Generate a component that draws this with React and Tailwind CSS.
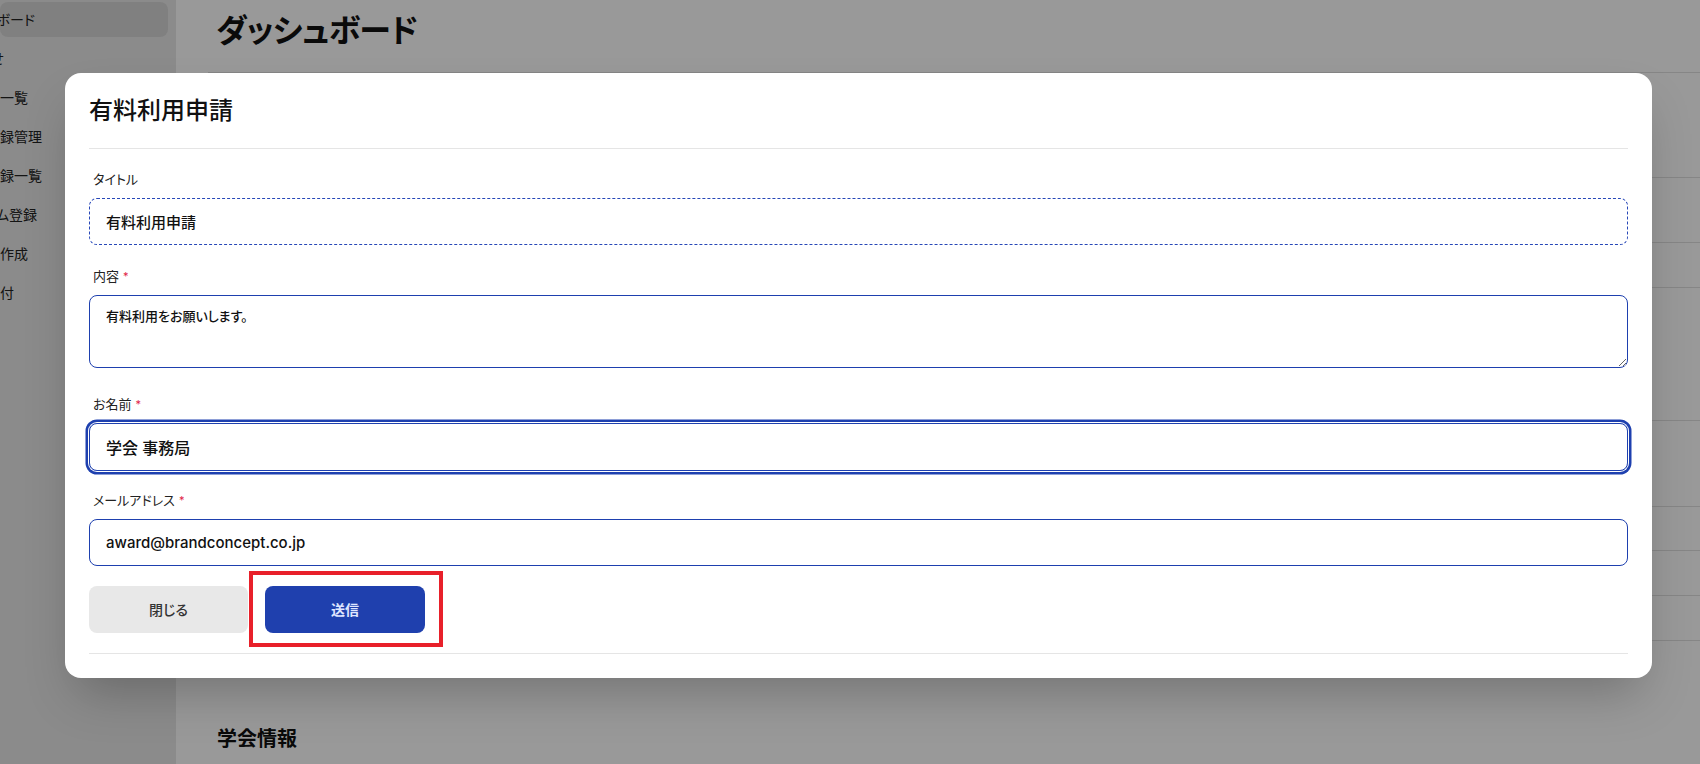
import { useState } from "react";

const menu = [
  { label: "ダッシュボード", shift: "-ml-[52px]", active: true },
  { label: "お知らせ", shift: "-ml-[49px]" },
  { label: "会員一覧", shift: "-ml-[28px]" },
  { label: "登録管理", shift: "-ml-[14px]" },
  { label: "登録一覧", shift: "-ml-[14px]" },
  { label: "プログラム登録", shift: "-ml-[55px]" },
  { label: "請求書作成", shift: "-ml-[42px]" },
  { label: "申請受付", shift: "-ml-[42px]" },
];

const rows = ["h-[105px]", "h-[65px]", "h-[45px]", "h-[133px]", "h-[86px]", "h-[44px]", "h-[45px]", "h-[45px]"];

function Label({ children, required }) {
  return (
    <label className="mb-[9px] flex h-5 items-center gap-1 text-[13px] leading-5 text-[#222]">
      {children}
      {required && <span className="text-[11px] text-[#e11d48]">*</span>}
    </label>
  );
}

function App() {
  const [title, setTitle] = useState("有料利用申請");
  const [body, setBody] = useState("有料利用をお願いします。");
  const [name, setName] = useState("学会 事務局");
  const [email, setEmail] = useState("award@brandconcept.co.jp");

  return (
    <div className="relative flex h-[764px] w-[1700px] overflow-hidden bg-white font-['Inter','Noto_Sans_CJK_JP',sans-serif] [font-feature-settings:'palt'] text-[#111]">
      {/* サイドバー */}
      <aside className="flex w-[176px] shrink-0 flex-col gap-[4px] bg-[#e8e8e8] pr-2 pt-[2px]">
        {menu.map((item) => (
          <div
            key={item.label}
            className={
              item.active
                ? "flex h-[35px] items-center overflow-hidden rounded-lg bg-[#d5d5d5] text-[14px] text-[#222]"
                : "flex h-[35px] items-center overflow-hidden text-[14px] text-[#222]"
            }
          >
            <span className={"whitespace-nowrap " + item.shift}>{item.label}</span>
          </div>
        ))}
      </aside>

      {/* メイン */}
      <main className="flex-1 pl-8 pt-[4px]">
        <h1 className="h-[68px] pl-[8px] pt-[5px] text-[32px] font-bold leading-[44px] tracking-[-0.02em]">ダッシュボード</h1>
        {rows.map((h, i) => (
          <div key={i} className={"border-t border-[#e0e0e0] " + h} />
        ))}
        <div className="border-t border-[#e0e0e0] pt-[84px] pl-[9px] text-[20px] font-bold leading-7">学会情報</div>
      </main>

      {/* モーダル */}
      <div className="absolute inset-0 bg-black/40 pl-[65px] pt-[73px]">
        <div className="w-[1587px] rounded-2xl bg-white px-6 pb-6 shadow-2xl">
          <div className="border-b border-[#e5e5e5] pb-[21px] pt-[22px]">
            <h2 className="text-[24px] font-medium leading-8 text-[#111]">有料利用申請</h2>
          </div>

          <form className="border-b border-[#e5e5e5] pb-5 pt-5" onSubmit={(e) => e.preventDefault()}>
            <div className="pl-[4px]">
              <Label>タイトル</Label>
            </div>
            <input
              value={title}
              onChange={(e) => setTitle(e.target.value)}
              className="block h-[47px] w-full rounded-lg border border-dashed border-[#2747b8] px-4 text-[15px] font-medium text-[#111] outline-none"
            />

            <div className="mt-[21px] pl-[4px]">
              <Label required>内容</Label>
            </div>
            <textarea
              value={body}
              onChange={(e) => setBody(e.target.value)}
              className="block h-[73px] w-full rounded-lg border border-[#1e40af] px-4 pt-[10px] text-[13px] font-medium leading-5 text-[#111] outline-none"
            />

            <div className="mt-[26px] pl-[4px]">
              <Label required>お名前</Label>
            </div>
            <input
              value={name}
              onChange={(e) => setName(e.target.value)}
              className="block h-[48px] w-full rounded-lg border border-[#1e40af] px-4 text-[16px] font-medium text-[#111] outline-none ring-[2.5px] ring-[#1e40af] ring-offset-[1px]"
            />

            <div className="mt-[19px] pl-[4px]">
              <Label required>メールアドレス</Label>
            </div>
            <input
              value={email}
              onChange={(e) => setEmail(e.target.value)}
              className="block h-[47px] w-full rounded-lg border border-[#1e40af] px-4 text-[15px] font-medium text-[#111] outline-none"
            />

            <div className="mt-5 flex gap-[17px]">
              <button type="button" className="h-[47px] w-[159px] rounded-lg bg-[#e8e8e8] text-[14px] font-medium text-[#333]">
                閉じる
              </button>
              <div className="relative">
                <button type="submit" className="h-[47px] w-[160px] rounded-lg bg-[#1f40ae] text-[14px] font-semibold text-[#dfe6ff]">
                  送信
                </button>
                <span className="pointer-events-none absolute -bottom-[14px] -left-[16px] -right-[18px] -top-[15px] border-4 border-[#e8202a]" />
              </div>
            </div>
          </form>
        </div>
      </div>
    </div>
  );
}

export default App;
